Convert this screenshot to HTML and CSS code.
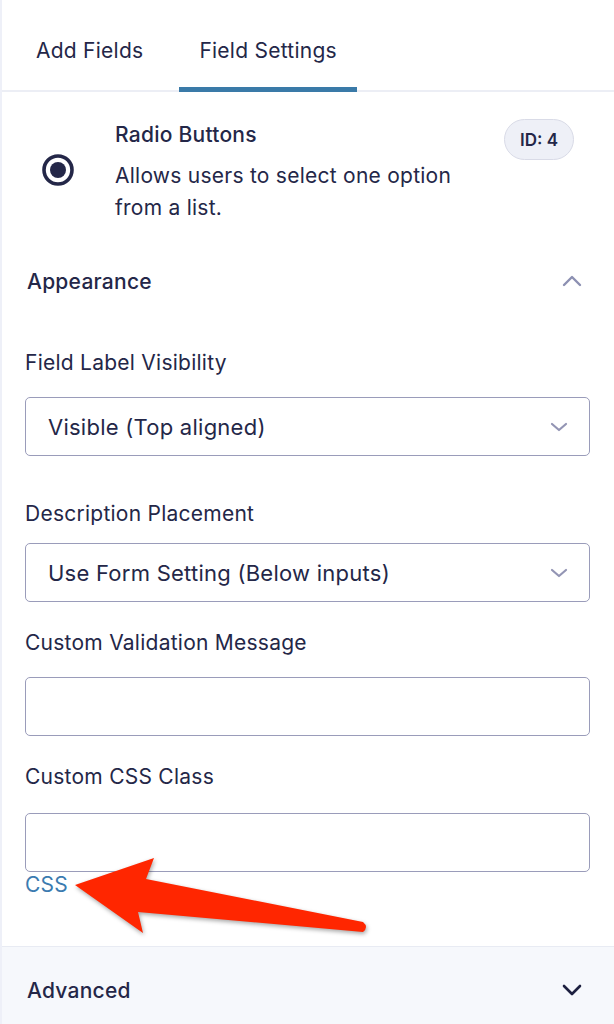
FILE: index.html
```html
<!DOCTYPE html>
<html lang="en">
<head>
<meta charset="utf-8">
<title>Field Settings</title>
<link rel="stylesheet" href="styles.css">
</head>
<body>
<div class="panel">
  <nav class="tabs">
    <a class="tab">Add Fields</a>
    <a class="tab tab-active">Field Settings</a>
  </nav>

  <section class="field-head">
    <div class="field-icon">
      <svg width="32" height="32" viewBox="0 0 32 32"><circle cx="16" cy="16" r="14" fill="none" stroke="#242748" stroke-width="3.6"/><circle cx="16" cy="16" r="8" fill="#242748"/></svg>
    </div>
    <div class="field-info">
      <div class="field-title">Radio Buttons</div>
      <div class="field-desc">Allows users to select one option from a list.</div>
    </div>
    <span class="field-id">ID: 4</span>
  </section>

  <section class="group">
    <div class="group-head">
      <span>Appearance</span>
      <svg class="chev chev-light" width="20" height="12" viewBox="0 0 20 12"><path d="M2 10 L10 2 L18 10" fill="none" stroke="currentColor" stroke-width="2.4" stroke-linecap="round" stroke-linejoin="round"/></svg>
    </div>

    <div class="field field-first">
      <label class="field-label">Field Label Visibility</label>
      <div class="select">
        <span>Visible (Top aligned)</span>
        <svg width="18" height="10" viewBox="0 0 18 10"><path d="M2 2 L9 8 L16 2" fill="none" stroke="currentColor" stroke-width="2.2" stroke-linecap="round" stroke-linejoin="round"/></svg>
      </div>
    </div>

    <div class="field field-tight">
      <label class="field-label">Description Placement</label>
      <div class="select">
        <span>Use Form Setting (Below inputs)</span>
        <svg width="18" height="10" viewBox="0 0 18 10"><path d="M2 2 L9 8 L16 2" fill="none" stroke="currentColor" stroke-width="2.2" stroke-linecap="round" stroke-linejoin="round"/></svg>
      </div>
    </div>

    <div class="field">
      <label class="field-label">Custom Validation Message</label>
      <div class="input"></div>
    </div>

    <div class="field field-css">
      <label class="field-label">Custom CSS Class</label>
      <div class="input"></div>
      <a class="help-link">CSS</a>
    </div>
  </section>

  <section class="group group-closed">
    <div class="group-head">
      <span>Advanced</span>
      <svg class="chev chev-dark" width="20" height="12" viewBox="0 0 20 12"><path d="M2 2 L10 10 L18 2" fill="none" stroke="currentColor" stroke-width="2.6" stroke-linecap="round" stroke-linejoin="round"/></svg>
    </div>
  </section>

  <svg class="callout" width="614" height="1024" viewBox="0 0 614 1024">
    <path d="M75 885 L154 858 L146 879 L363 922 Q369 927 363 932 L138 912 L143 933 Z" fill="#ff2600"/>
  </svg>
</div>
</body>
</html>
```

FILE: styles.css
```css
* { box-sizing: border-box; }

html, body {
  margin: 0;
  padding: 0;
  background: #ffffff;
}

body {
  font-family: Inter, "Noto Sans", sans-serif;
  font-size: 21px;
  letter-spacing: 0.25px;
  color: #242748;
  -webkit-font-smoothing: antialiased;
}

.panel {
  position: relative;
  width: 614px;
  height: 1024px;
  overflow: hidden;
  border-left: 2px solid #eef0f8;
  display: flex;
  flex-direction: column;
}

/* tabs */
.tabs {
  display: flex;
  gap: 16px;
  height: 92px;
  padding-left: 14px;
  box-shadow: inset 0 -2px 0 #eceef5;
}

.tab {
  display: flex;
  align-items: center;
  padding: 8px 20px 0;
  font-size: 21px;
  color: #242748;
}

.tab-active {
  box-shadow: inset 0 -5px 0 #3a7aa8;
}

/* field header */
.field-head {
  display: flex;
  align-items: flex-start;
  padding: 28px 40px 0 40px;
  height: 156px;
}

.field-icon {
  width: 32px;
  height: 32px;
  margin-top: 34px;
  flex: none;
}

.field-icon svg { display: block; }

.field-info {
  flex: 1;
  padding-left: 41px;
  padding-right: 24px;
}

.field-title {
  font-size: 21px;
  font-weight: 500;
  line-height: 28px;
  margin-top: 1px;
}

.field-desc {
  margin-top: 11px;
  font-size: 21px;
  line-height: 32px;
}

.field-id {
  flex: none;
  height: 41px;
  margin-top: -1px;
  padding: 0 15px;
  display: flex;
  align-items: center;
  border-radius: 21px;
  background: #eef0f7;
  border: 1px solid #d9dbe7;
  font-size: 17px;
  font-weight: 600;
  letter-spacing: 0;
}

/* collapsible groups */
.group {
  padding: 0 23px 0 23px;
}

.group-head {
  display: flex;
  align-items: center;
  justify-content: space-between;
  height: 66px;
  font-size: 21px;
  font-weight: 500;
  padding-left: 2px;
}

.chev { display: block; margin-right: 9px; }
.chev-light { color: #8c90b2; }
.chev-dark { color: #1d2040; }

.group-closed {
  margin-top: auto;
  height: 78px;
  background: #f6f8fc;
  border-top: 1px solid #e8ebf3;
  padding-top: 10px;
}

/* fields */
.field { margin-top: 27px; }
.field-first { margin-top: 35px; }
.field-tight { margin-top: 44px; }

.field-label {
  display: block;
  font-size: 21px;
  line-height: 28px;
  margin-bottom: 20px;
}

.field-tight .field-label { margin-bottom: 15px; }
.field-css .field-label { margin-bottom: 22px; }

.select,
.input {
  width: 565px;
  height: 59px;
  border: 1.5px solid #9a9cba;
  border-radius: 5px;
  background: #fff;
}

.select {
  display: flex;
  align-items: center;
  justify-content: space-between;
  padding: 0 21px 0 22px;
  font-size: 22px;
  color: #242748;
}

.select svg { color: #9395b4; display: block; }

.help-link {
  display: block;
  font-size: 21px;
  line-height: 26px;
  color: #3b7bb0;
}

/* annotation overlay */
.callout {
  position: absolute;
  top: 0;
  left: -2px;
  pointer-events: none;
  filter: drop-shadow(1px 2px 2px rgba(0, 0, 0, 0.35));
}
```
